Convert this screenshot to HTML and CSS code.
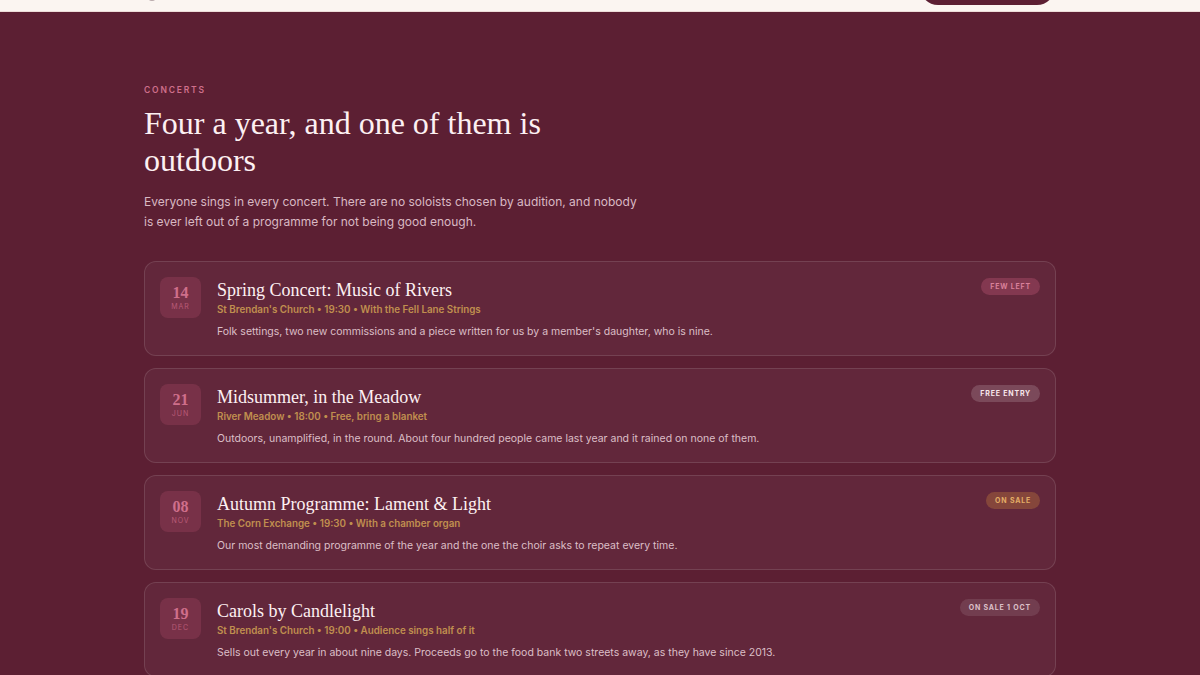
FILE: index.html
```html
<!DOCTYPE html>
<html lang="en">

<head>
    <meta charset="UTF-8">
    <meta name="viewport" content="width=device-width, initial-scale=1.0">
    <title>Concerts</title>
    <link rel="stylesheet" href="styles.css">
</head>

<body>

    <header class="topbar">
        <div class="topbar-inner">
            <span class="logo-dot"></span>
            <a class="join-btn" href="#"></a>
        </div>
    </header>

    <section class="concerts">
        <div class="container">
            <p class="eyebrow">Concerts</p>
            <h1 class="heading">Four a year, and one of them is outdoors</h1>
            <p class="lead">Everyone sings in every concert. There are no soloists chosen by audition, and nobody is ever left out of a programme for not being good enough.</p>

            <div class="eventlist">
                <div class="event">
                    <div class="date">
                        <span class="day">14</span>
                        <span class="month">Mar</span>
                    </div>
                    <div class="info">
                        <h3 class="title">Spring Concert: Music of Rivers</h3>
                        <p class="meta">St Brendan's Church • 19:30 • With the Fell Lane Strings</p>
                        <p class="desc">Folk settings, two new commissions and a piece written for us by a member's daughter, who is nine.</p>
                    </div>
                    <span class="badge few">Few left</span>
                </div>

                <div class="event">
                    <div class="date">
                        <span class="day">21</span>
                        <span class="month">Jun</span>
                    </div>
                    <div class="info">
                        <h3 class="title">Midsummer, in the Meadow</h3>
                        <p class="meta">River Meadow • 18:00 • Free, bring a blanket</p>
                        <p class="desc">Outdoors, unamplified, in the round. About four hundred people came last year and it rained on none of them.</p>
                    </div>
                    <span class="badge free">Free entry</span>
                </div>

                <div class="event">
                    <div class="date">
                        <span class="day">08</span>
                        <span class="month">Nov</span>
                    </div>
                    <div class="info">
                        <h3 class="title">Autumn Programme: Lament &amp; Light</h3>
                        <p class="meta">The Corn Exchange • 19:30 • With a chamber organ</p>
                        <p class="desc">Our most demanding programme of the year and the one the choir asks to repeat every time.</p>
                    </div>
                    <span class="badge sale">On sale</span>
                </div>

                <div class="event">
                    <div class="date">
                        <span class="day">19</span>
                        <span class="month">Dec</span>
                    </div>
                    <div class="info">
                        <h3 class="title">Carols by Candlelight</h3>
                        <p class="meta">St Brendan's Church • 19:00 • Audience sings half of it</p>
                        <p class="desc">Sells out every year in about nine days. Proceeds go to the food bank two streets away, as they have since 2013.</p>
                    </div>
                    <span class="badge soon">On sale 1 Oct</span>
                </div>
            </div>
        </div>
    </section>

</body>

</html>
```

FILE: styles.css
```css
* {
    margin: 0;
    padding: 0;
    box-sizing: border-box;
}

body {
    background: #5c1f33;
    font-family: Inter, "Liberation Sans", sans-serif;
    color: #fbeef1;
    height: 675px;
    overflow: hidden;
}

.topbar {
    height: 12px;
    background: #fbf5f1;
    border-bottom: 1px solid #ecdcd8;
    overflow: hidden;
}

.topbar-inner {
    width: 912px;
    margin: 0 auto;
    display: flex;
    justify-content: space-between;
    align-items: flex-end;
    height: 5px;
}

.logo-dot {
    width: 8px;
    height: 8px;
    margin-left: 4px;
    margin-bottom: 4px;
    border-radius: 50%;
    background: #b9a9ab;
}

.join-btn {
    display: block;
    width: 135px;
    height: 36px;
    margin-right: 1px;
    border-radius: 18px;
    background: #5c1f33;
    flex-shrink: 0;
}

.concerts {
    padding-top: 73px;
}

.container {
    width: 912px;
    margin: 0 auto;
}

.eyebrow {
    font-size: 8.5px;
    font-weight: 600;
    letter-spacing: 1.8px;
    text-transform: uppercase;
    color: #cf6f8b;
}

.heading {
    margin-top: 10px;
    max-width: 440px;
    font-family: "Liberation Serif", serif;
    font-weight: 400;
    font-size: 32px;
    line-height: 37px;
    color: #fdf0f2;
}

.lead {
    margin-top: 13px;
    max-width: 500px;
    font-size: 12px;
    line-height: 20px;
    color: #d9b9c3;
}

.eventlist {
    margin-top: 29px;
    display: flex;
    flex-direction: column;
    gap: 12px;
}

.event {
    display: flex;
    align-items: flex-start;
    gap: 16px;
    padding: 15px 15px 15px 15px;
    border: 1px solid rgba(255, 255, 255, 0.12);
    border-radius: 12px;
    background: rgba(255, 255, 255, 0.04);
}

.date {
    width: 41px;
    height: 41px;
    flex-shrink: 0;
    border-radius: 8px;
    background: rgba(220, 100, 135, 0.18);
    display: flex;
    flex-direction: column;
    align-items: center;
    justify-content: center;
}

.day {
    font-family: "Liberation Serif", serif;
    font-size: 16px;
    font-weight: 700;
    line-height: 17px;
    color: #cf6f8b;
}

.month {
    font-size: 7px;
    letter-spacing: 1px;
    text-transform: uppercase;
    color: #b85a77;
    line-height: 11px;
}

.info {
    flex: 1;
    padding-top: 1px;
}

.title {
    font-family: "Liberation Serif", serif;
    font-weight: 400;
    font-size: 18px;
    line-height: 24px;
    color: #fdf0f2;
}

.meta {
    margin-top: 1px;
    font-size: 9.8px;
    font-weight: 600;
    line-height: 14px;
    color: #c08f4f;
}

.desc {
    margin-top: 7px;
    font-size: 10.5px;
    line-height: 16px;
    color: #dcbfc7;
}

.badge {
    flex-shrink: 0;
    margin-top: 1px;
    padding: 4px 9px;
    border-radius: 10px;
    font-size: 7px;
    font-weight: 700;
    letter-spacing: 0.8px;
    text-transform: uppercase;
    line-height: 9px;
}

.badge.few {
    background: rgba(220, 100, 135, 0.28);
    color: #d9809a;
}

.badge.free {
    background: rgba(255, 255, 255, 0.16);
    color: #f8e8ec;
}

.badge.sale {
    background: rgba(200, 130, 60, 0.35);
    color: #e3ac66;
}

.badge.soon {
    background: rgba(255, 255, 255, 0.1);
    color: #dcc0c8;
}
```
